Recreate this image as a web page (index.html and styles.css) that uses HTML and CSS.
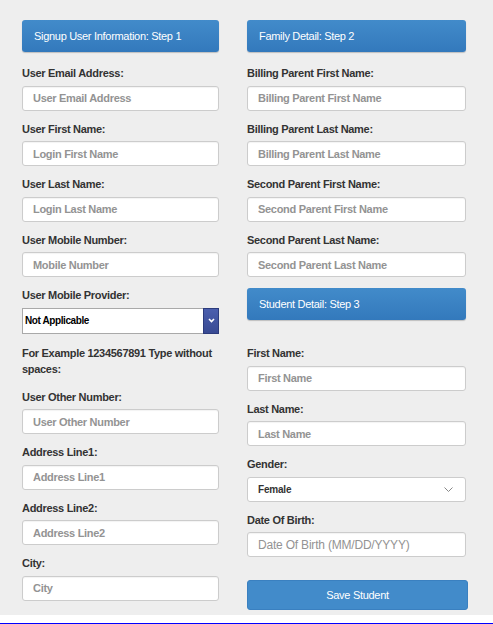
FILE: index.html
```html
<!DOCTYPE html>
<html lang="en">
  <head>
    <meta charset="UTF-8" />
    <meta name="viewport" content="width=device-width, initial-scale=1.0" />
    <title>Signup</title>
    <link rel="stylesheet" href="styles.css">
  </head>
  <body>
    <div class="wrap">
      <div class="col col-left">
        <div class="step-head">Signup User Information: Step 1</div>
        <div class="field">
          <label>User Email Address:</label>
          <input type="text" placeholder="User Email Address" />
        </div>
        <div class="field">
          <label>User First Name:</label>
          <input type="text" placeholder="Login First Name" />
        </div>
        <div class="field">
          <label>User Last Name:</label>
          <input type="text" placeholder="Login Last Name" />
        </div>
        <div class="field">
          <label>User Mobile Number:</label>
          <input type="text" placeholder="Mobile Number" />
        </div>
        <div class="field">
          <label>User Mobile Provider:</label>
          <div class="provider">
            <select>
              <option>Not Applicable</option>
            </select>
            <span class="provider-btn">
              <svg width="7" height="5" viewBox="0 0 7 5"><polyline points="1,1 3.5,3.5 6,1" fill="none" stroke="#fff" stroke-width="1.6" /></svg>
            </span>
          </div>
        </div>
        <p class="hint">For Example 1234567891 Type without spaces:</p>
        <div class="field">
          <label>User Other Number:</label>
          <input type="text" placeholder="User Other Number" />
        </div>
        <div class="field">
          <label>Address Line1:</label>
          <input type="text" placeholder="Address Line1" />
        </div>
        <div class="field">
          <label>Address Line2:</label>
          <input type="text" placeholder="Address Line2" />
        </div>
        <div class="field">
          <label>City:</label>
          <input type="text" placeholder="City" />
        </div>
      </div>

      <div class="col col-right">
        <div class="step-head">Family Detail: Step 2</div>
        <div class="field">
          <label>Billing Parent First Name:</label>
          <input type="text" placeholder="Billing Parent First Name" />
        </div>
        <div class="field">
          <label>Billing Parent Last Name:</label>
          <input type="text" placeholder="Billing Parent Last Name" />
        </div>
        <div class="field">
          <label>Second Parent First Name:</label>
          <input type="text" placeholder="Second Parent First Name" />
        </div>
        <div class="field">
          <label>Second Parent Last Name:</label>
          <input type="text" placeholder="Second Parent Last Name" />
        </div>

        <div class="step-head student">Student Detail: Step 3</div>
        <div class="field">
          <label>First Name:</label>
          <input type="text" placeholder="First Name" />
        </div>
        <div class="field">
          <label>Last Name:</label>
          <input type="text" placeholder="Last Name" />
        </div>
        <div class="field">
          <label>Gender:</label>
          <div class="gender">
            <select>
              <option>Female</option>
              <option>Male</option>
            </select>
            <svg width="9" height="5" viewBox="0 0 9 5"><polyline points="0.5,0.5 4.5,4.5 8.5,0.5" fill="none" stroke="#888" stroke-width="1" /></svg>
          </div>
        </div>
        <div class="field">
          <label>Date Of Birth:</label>
          <input type="text" class="dob" placeholder="Date Of Birth (MM/DD/YYYY)" />
        </div>
        <button class="save">Save Student</button>
      </div>
    </div>
    <div class="footer-line"></div>
  </body>
</html>
```

FILE: styles.css
```css
* {
  margin: 0;
  padding: 0;
  box-sizing: border-box;
}
body {
  background: #fff;
  font-family: "Liberation Sans", Arial, sans-serif;
  font-size: 11px;
  color: #333;
  letter-spacing: -0.3px;
}
.wrap {
  display: grid;
  grid-template-columns: 197px 219px;
  column-gap: 28px;
  align-items: start;
  background: #eee;
  padding: 20px 0 3px 22px;
}
.step-head {
  height: 32px;
  line-height: 32px;
  padding-left: 12px;
  color: #fff;
  background: linear-gradient(#428bca, #3379bc);
  border-radius: 3px;
  box-shadow: 0 1px 1px rgba(0, 0, 0, 0.2);
  margin-bottom: 14px;
}
.step-head.student {
  margin-bottom: 26px;
}
.field {
  margin-bottom: 11px;
}
.field label {
  display: block;
  line-height: 14px;
  font-weight: bold;
  margin-bottom: 5.5px;
}
.field input {
  display: block;
  width: 100%;
  height: 25px;
  padding: 0 10px;
  border: 1px solid #ccc;
  border-radius: 3px;
  background: #fff;
  box-shadow: inset 0 1px 1px rgba(0, 0, 0, 0.05);
  font-family: inherit;
  font-size: 11px;
  font-weight: bold;
  letter-spacing: -0.3px;
  color: #333;
  outline: none;
}
.field input::placeholder {
  color: #939393;
}
.field input.dob {
  font-size: 12px;
  font-weight: normal;
  letter-spacing: -0.2px;
}
.provider {
  display: flex;
  height: 26px;
  border: 1px solid #a9a9a9;
  background: #fff;
}
.provider select {
  flex: 1;
  appearance: none;
  border: none;
  background: transparent;
  padding-left: 2px;
  font-family: "Liberation Sans", Arial, sans-serif;
  font-size: 10px;
  font-weight: bold;
  letter-spacing: -0.4px;
  color: #000;
  outline: none;
}
.provider-btn {
  width: 16px;
  margin: -1px -1px -1px 0;
  display: flex;
  align-items: center;
  justify-content: center;
  background: linear-gradient(#4b5fae, #384a93);
  border: 1px solid #2c3b7c;
}
.hint {
  font-weight: bold;
  line-height: 16px;
  margin-bottom: 13px;
}
.gender {
  display: flex;
  align-items: center;
  height: 25px;
  border: 1px solid #ccc;
  border-radius: 3px;
  background: #fff;
}
.gender select {
  flex: 1;
  height: 100%;
  appearance: none;
  border: none;
  background: transparent;
  padding-left: 10px;
  font-family: "Liberation Sans", Arial, sans-serif;
  font-size: 10px;
  font-weight: bold;
  letter-spacing: -0.2px;
  color: #333;
  outline: none;
}
.gender svg {
  margin-right: 12px;
}
.save {
  display: block;
  width: 221px;
  height: 30px;
  margin-top: 23px;
  border: 1px solid #3a80c0;
  border-radius: 3px;
  background: #428bca;
  color: #fff;
  font-family: inherit;
  font-size: 11px;
  letter-spacing: -0.3px;
  cursor: pointer;
}
.footer-line {
  margin-top: 8px;
  border-top: 2px solid #0000ff;
}
```
